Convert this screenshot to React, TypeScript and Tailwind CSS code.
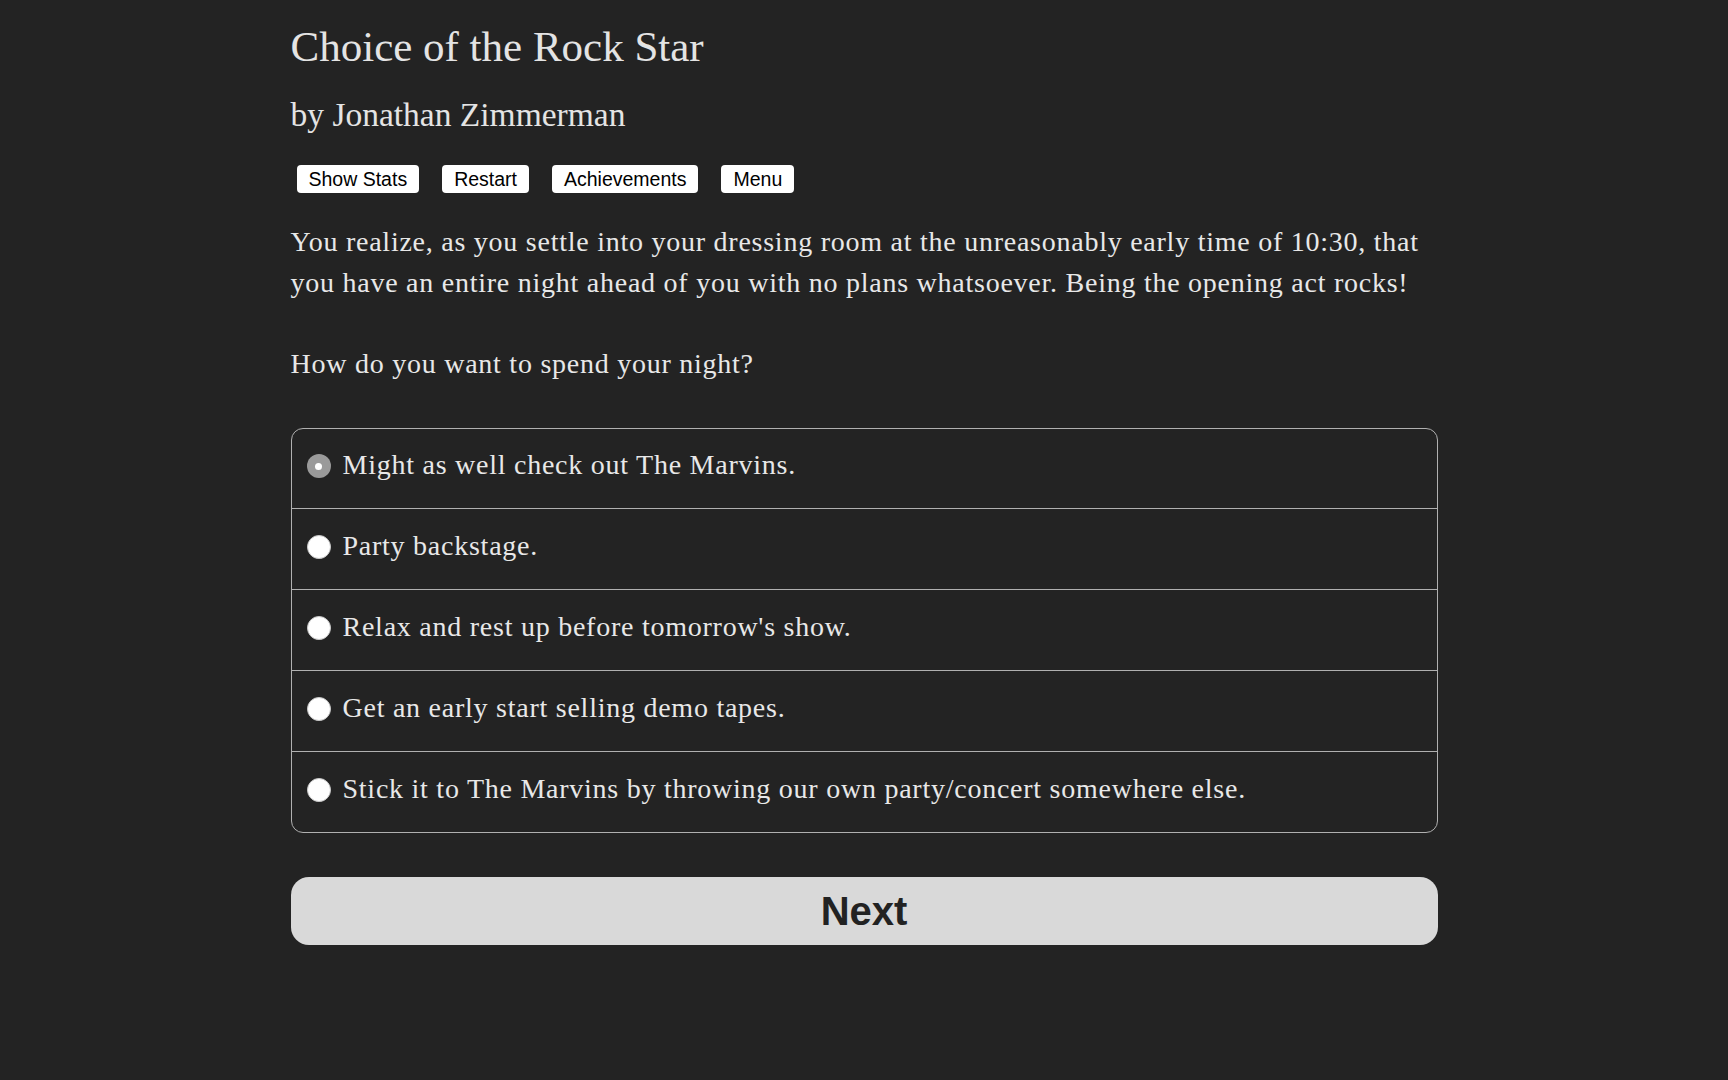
import { useState } from "react";

const serif = "font-['Liberation_Serif','Times_New_Roman',serif]";
const sans = "font-['Liberation_Sans',Arial,sans-serif]";

const options = [
  "Might as well check out The Marvins.",
  "Party backstage.",
  "Relax and rest up before tomorrow's show.",
  "Get an early start selling demo tapes.",
  "Stick it to The Marvins by throwing our own party/concert somewhere else.",
];

function Radio({ checked }: { checked: boolean }) {
  if (checked) {
    return (
      <span className="mt-[10px] flex h-6 w-6 shrink-0 items-center justify-center rounded-full bg-[#9a9a9a]">
        <span className="h-[7px] w-[7px] rounded-full bg-white" />
      </span>
    );
  }
  return <span className="mt-[10px] h-6 w-6 shrink-0 rounded-full border border-[#c9c9c9] bg-white" />;
}

export default function App() {
  const [selected, setSelected] = useState(0);

  return (
    <div className={`min-h-screen bg-[#232323] text-[#e8e8e8] ${serif}`}>
      <div className="mx-auto max-w-[1147px] pt-[22px] pb-[120px]">
        <h1 className="text-[43px] leading-[50px] font-normal text-[#e4e4e4]">Choice of the Rock Star</h1>
        <h2 className="mt-[23px] text-[33.5px] leading-[40px] font-normal text-[#e4e4e4]">by Jonathan Zimmerman</h2>

        <div className={`ml-[6px] mt-[30px] flex gap-[23px] ${sans}`}>
          {["Show Stats", "Restart", "Achievements", "Menu"].map((label) => (
            <button
              key={label}
              type="button"
              className="h-[28px] rounded-[4px] bg-white px-3 text-[19.5px] leading-[28px] text-black"
            >
              {label}
            </button>
          ))}
        </div>

        <p className="mt-[28px] text-[28px] leading-[41px] tracking-[0.75px]">
          You realize, as you settle into your dressing room at the unreasonably early time of 10:30, that you
          have an entire night ahead of you with no plans whatsoever. Being the opening act rocks!
        </p>
        <p className="mt-[40px] text-[28px] leading-[41px] tracking-[0.75px]">How do you want to spend your night?</p>

        <div className="mt-[44px] overflow-hidden rounded-[12px] border border-[#b0b0b0]">
          {options.map((text, i) => (
            <label
              key={text}
              onClick={() => setSelected(i)}
              className={`flex cursor-pointer items-start gap-3 pl-[15px] text-[28px] leading-[41px] tracking-[0.75px] ${
                i > 0 ? "h-[81px] border-t border-[#b0b0b0] pt-[16px]" : "h-[79px] pt-[15px]"
              }`}
            >
              <Radio checked={selected === i} />
              <span>{text}</span>
            </label>
          ))}
        </div>

        <button
          type="button"
          className={`mt-[44px] h-[68px] w-full rounded-[18px] bg-[#d9d9d9] text-[40px] font-bold text-[#222] ${sans}`}
        >
          Next
        </button>
      </div>
    </div>
  );
}
